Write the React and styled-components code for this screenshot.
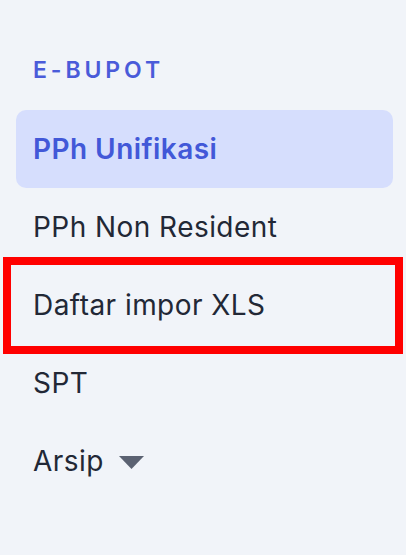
import React from 'react';
import styled, { createGlobalStyle, css } from 'styled-components';

const GlobalStyle = createGlobalStyle`
  html, body {
    margin: 0;
    padding: 0;
    background: #f1f4f9;
  }

  body {
    font-family: Inter, 'Noto Sans', sans-serif;
    -webkit-font-smoothing: antialiased;
  }
`;

const items = [
  { title: 'PPh Unifikasi', active: true },
  { title: 'PPh Non Resident' },
  { title: 'Daftar impor XLS', highlighted: true },
  { title: 'SPT' },
  { title: 'Arsip', hasMenu: true }
];

const Caret = () => (
  <CaretIcon viewBox="0 0 25 13" width="25" height="13">
    <path d="M0 0 H25 L12.5 13 Z" fill="currentColor" />
  </CaretIcon>
);

const App = () => (
  <>
    <GlobalStyle />
    <Sidebar>
      <SectionTitle>E-BUPOT</SectionTitle>
      <Menu>
        {items.map(item => (
          <MenuItem
            key={item.title}
            isActive={item.active}
            isHighlighted={item.highlighted}
          >
            <span>{item.title}</span>
            {item.hasMenu && <Caret />}
          </MenuItem>
        ))}
      </Menu>
    </Sidebar>
  </>
);

export default App;

const Sidebar = styled.nav`
  width: 406px;
  min-height: 555px;
  box-sizing: border-box;
  padding: 55px 13px 0 16px;
  background: #f1f4f9;
`;

const SectionTitle = styled.div`
  height: 30px;
  display: flex;
  align-items: center;
  padding-left: 17px;
  margin-bottom: 25px;

  font-size: 23px;
  font-weight: 600;
  letter-spacing: 0.17em;
  color: #4a5bd9;
`;

const Menu = styled.ul`
  list-style: none;
  margin: 0;
  padding: 0;
  display: flex;
  flex-direction: column;
`;

const MenuItem = styled.li`
  position: relative;
  height: 78px;
  display: flex;
  align-items: center;
  gap: 15px;
  padding-left: 17px;
  border-radius: 10px;

  font-size: 28px;
  font-weight: 400;
  letter-spacing: 0.016em;
  color: #222836;

  ${({ isActive }) =>
    isActive &&
    css`
      background: #d6defd;
      color: #4258d8;
      font-weight: 600;
    `}

  ${({ isHighlighted }) =>
    isHighlighted &&
    css`
      &::after {
        content: '';
        position: absolute;
        top: -9px;
        bottom: -10px;
        left: -13px;
        right: -10px;
        border: 8px solid #ff0000;
      }
    `}
`;

const CaretIcon = styled.svg`
  color: #5b6272;
  margin-top: 2px;
`;
